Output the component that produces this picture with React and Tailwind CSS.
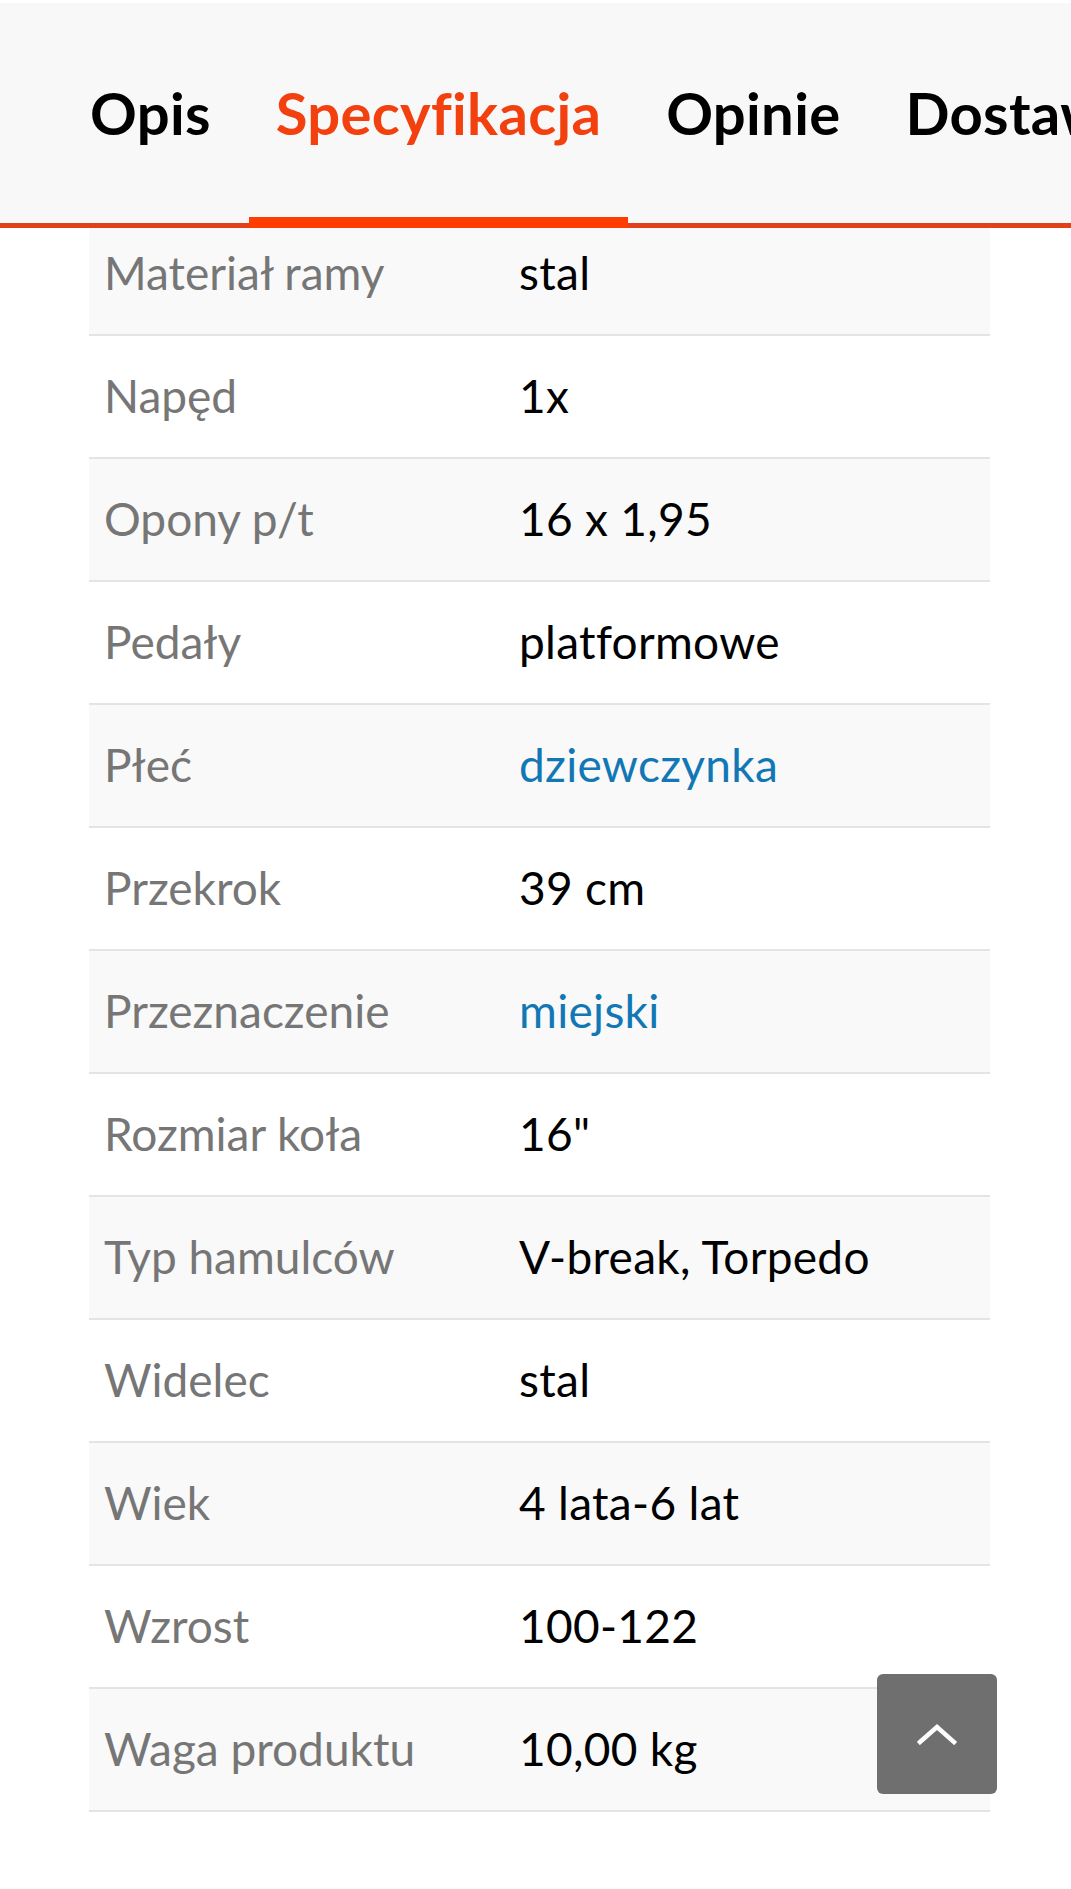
import React from "react";

const specs = [
    { label: "Materiał ramy", value: "stal" },
    { label: "Napęd", value: "1x" },
    { label: "Opony p/t", value: "16 x 1,95" },
    { label: "Pedały", value: "platformowe" },
    { label: "Płeć", value: "dziewczynka", link: true },
    { label: "Przekrok", value: "39 cm" },
    { label: "Przeznaczenie", value: "miejski", link: true },
    { label: "Rozmiar koła", value: "16\"" },
    { label: "Typ hamulców", value: "V-break, Torpedo" },
    { label: "Widelec", value: "stal" },
    { label: "Wiek", value: "4 lata-6 lat" },
    { label: "Wzrost", value: "100-122" },
    { label: "Waga produktu", value: "10,00 kg" },
];

const tabs = ["Opis", "Specyfikacja", "Opinie", "Dostawa"];

const App = () => {
    return (
        <div className="relative w-[1071px] min-h-[1889px] bg-white overflow-hidden" style={{ fontFamily: "Lato, 'Open Sans', sans-serif" }}>
            {/* Tabs */}
            <header className="relative z-10 mt-[3px] bg-[#f8f8f8] overflow-hidden">
                <nav className="flex gap-[11px] pl-[63px] h-[225px] whitespace-nowrap border-b-[5px] border-[#e0401a]">
                    {tabs.map((t) => {
                        const active = t === "Specyfikacja";
                        return (
                            <div
                                key={t}
                                className={
                                    "relative flex items-center px-[27px] pb-[2px] text-[58px] font-bold tracking-[0.3px] " +
                                    (active ? "text-[#f2410f]" : "text-black")
                                }
                            >
                                {t}
                                {active && <span className="absolute left-0 right-0 bottom-[-5px] h-[11px] bg-[#ff3d00]" />}
                            </div>
                        );
                    })}
                </nav>
            </header>

            {/* Spec table */}
            <div className="ml-[89px] w-[901px] -mt-[15px]">
                {specs.map((s, i) => (
                    <div
                        key={s.label}
                        className={
                            "flex items-center h-[123px] pb-[2px] border-b-2 border-[#e4e4e4] text-[46px] " +
                            (i % 2 === 0 ? "bg-[#f9f9f9]" : "bg-white")
                        }
                    >
                        <div className="w-[430px] pl-[15px] text-[#767676]">{s.label}</div>
                        <div className={s.link ? "text-[#1277b5] tracking-[0.3px]" : "text-black tracking-[0.3px]"}>{s.value}</div>
                    </div>
                ))}
            </div>

            {/* Back to top */}
            <button className="absolute left-[877px] top-[1674px] w-[120px] h-[120px] rounded-[6px] bg-[#6f6f6f] flex items-center justify-center">
                <svg width="40" height="22" viewBox="0 0 40 22" fill="none" stroke="white" strokeWidth="4.5" strokeLinecap="square">
                    <path d="M3 19 L20 4 L37 19" />
                </svg>
            </button>
        </div>
    );
};

export default App;
